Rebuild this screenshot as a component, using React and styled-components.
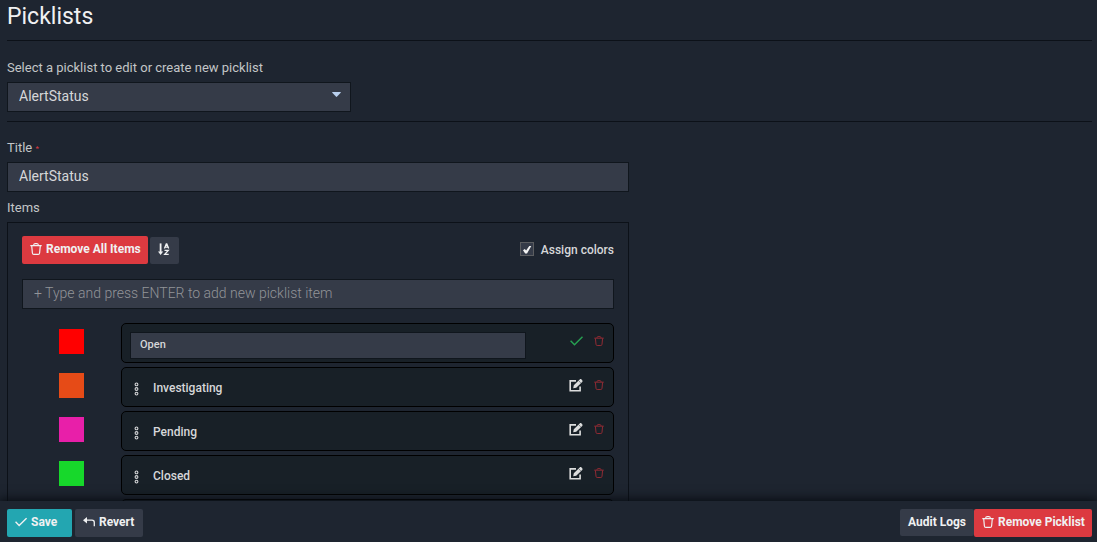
import React, { useState } from "react";
import styled, { createGlobalStyle } from "styled-components";

const GlobalStyle = createGlobalStyle`
  * { box-sizing: border-box; }
  body {
    margin: 0;
    background: #1e2530;
    color: #d6d7d9;
    font-family: Roboto, "Liberation Sans", sans-serif;
    font-size: 12px;
  }
  button, input, select { font: inherit; color: inherit; margin: 0; }
`;

const Page = styled.div`
  height: 100vh;
  display: flex;
  flex-direction: column;
`;

const Content = styled.main`
  flex: 1;
  min-height: 0;
  overflow-y: auto;
  scrollbar-width: none;
  padding: 0 5px 0 7px;
`;

const Heading = styled.h1`
  margin: 0;
  padding-top: 2px;
  height: 40px;
  font-size: 23px;
  line-height: 30px;
  font-weight: 400;
  color: #f0f1f2;
`;

const Rule = styled.hr`
  margin: 0;
  border: 0;
  height: 1px;
  background: #0c1118;
`;

const Field = styled.div`
  display: flex;
  flex-direction: column;
  padding-top: ${(p) => p.$top}px;
  max-width: ${(p) => p.$width}px;
`;

const Label = styled.label`
  font-size: 13px;
  line-height: 16px;
  margin-bottom: 6px;
  font-weight: 400;
  color: #c3c5c7;
`;

const Required = styled.span`
  color: #dc3a40;
  font-size: 8px;
  line-height: 8px;
  vertical-align: 1px;
`;

const TextBox = styled.input`
  width: 100%;
  height: 30px;
  padding: 0 11px 2px;
  border: 1px solid #10161d;
  border-radius: 0;
  outline: 0;
  background: #353b48;
  font-size: 14px;
  &::placeholder { color: #929498; opacity: 1; font-weight: 300; }
`;

const SelectWrap = styled.div`
  display: grid;
  align-items: center;
  margin-bottom: 9px;
  > * { grid-area: 1 / 1; }
  > svg { justify-self: end; margin: 0 10px 5px 0; pointer-events: none; }
`;

const Select = styled.select`
  appearance: none;
  width: 100%;
  height: 30px;
  padding: 0 11px 2px;
  border: 1px solid #10161d;
  border-radius: 0;
  outline: 0;
  background: #353b48;
  font-size: 14px;
`;

const Panel = styled.section`
  max-width: 622px;
  padding: 13px 14px;
  border: 1px solid #0c1118;
`;

const Toolbar = styled.div`
  display: flex;
  align-items: flex-end;
  gap: 2px;
  margin-bottom: 15px;
`;

const colours = { danger: "#dc3a40", primary: "#23a6b1", plain: "#353b48" };

const Button = styled.button`
  display: inline-flex;
  align-items: center;
  gap: 4px;
  height: ${(p) => (p.$short ? 27 : 28)}px;
  min-width: ${(p) => p.$width}px;
  padding: 0 6px 2px 8px;
  border: 0;
  border-radius: 2px;
  background: ${(p) => colours[p.$kind]};
  color: #f0f1f2;
  font-size: 12px;
  font-weight: 700;
  white-space: nowrap;
`;

const CheckLabel = styled.label`
  display: flex;
  align-items: center;
  gap: 7px;
  height: 28px;
  margin-left: auto;
  font-weight: 500;
`;

const Check = styled.input`
  appearance: none;
  width: 14px;
  height: 14px;
  border: 1px solid #5b5d60;
  background: #353b48;
`;

const CheckBoxWrap = styled.span`
  display: grid;
  padding-bottom: 2px;
  > * { grid-area: 1 / 1; }
  > svg { pointer-events: none; }
`;

const List = styled.ul`
  list-style: none;
  margin: 14px 0 0;
  padding: 0;
  display: flex;
  flex-direction: column;
  gap: 4px;
`;

const Item = styled.li`
  display: grid;
  grid-template-columns: 99px 1fr;
`;

const Swatch = styled.input`
  appearance: none;
  width: 25px;
  height: 25px;
  margin: 6px 37px;
  padding: 0;
  border: 0;
  background: none;
  &::-webkit-color-swatch-wrapper { padding: 0; }
  &::-webkit-color-swatch { border: 0; border-radius: 0; }
`;

const Card = styled.div`
  display: flex;
  align-items: center;
  height: 40px;
  padding: 0 9px 0 8px;
  border: 1px solid #000;
  border-radius: 5px;
  background: #182027;
`;

const Grip = styled.span`
  display: flex;
  padding: 4px 4px 0;
  margin-right: 10px;
`;

const Name = styled.span`
  padding-top: 2px;
  font-weight: 500;
`;

const EditBox = styled.input`
  flex: 0 1 396px;
  min-width: 0;
  height: 27px;
  margin-top: 5px;
  padding: 0 9px 2px;
  border: 1px solid #10161d;
  outline: 0;
  background: #353b48;
  font-size: 11px;
  font-weight: 500;
`;

const Actions = styled.div`
  display: flex;
  align-items: center;
  gap: 11px;
  margin-left: auto;
  padding-bottom: 4px;
`;

const IconButton = styled.button`
  display: flex;
  padding: 0;
  border: 0;
  background: none;
  color: ${(p) => p.$color};
`;

const Footer = styled.footer`
  position: relative;
  display: flex;
  align-items: flex-start;
  gap: 3px;
  height: 41px;
  padding: 8px 5px 0 7px;
  background: #1e2530;
  box-shadow: 0 -1px 10px 1px #080c12;
`;

const FooterEnd = styled.div`
  display: flex;
  align-items: flex-start;
  margin-left: auto;
`;

const TrashIcon = ({ size = 12 }) => (
  <svg width={size} height={size} viewBox="0 0 12 12" fill="none" stroke="currentColor" strokeWidth="1.2" aria-hidden="true">
    <path d="M.3 2.6h11.4M3.6 2.5c0-1.3.6-1.9 1.4-1.9h2c.8 0 1.4.6 1.4 1.9M1.7 2.8l.7 7.2c.1 1 .6 1.4 1.4 1.4h4.4c.8 0 1.3-.4 1.4-1.4l.7-7.2" />
  </svg>
);

const TickIcon = ({ width = 13 }) => (
  <svg width={width} height="10" viewBox="0 0 13 10" fill="none" stroke="currentColor" strokeWidth="1.5" aria-hidden="true">
    <path d="M.6 4.8 4.5 8.7 12.5.8" />
  </svg>
);

const UndoIcon = () => (
  <svg width="12" height="10" viewBox="0 0 12 10" aria-hidden="true">
    <path d="M0 3.2 4 0v6.4z" fill="currentColor" />
    <path d="M3 3.2h6c1.6 0 2.3.8 2.3 2.2v3.8" fill="none" stroke="currentColor" strokeWidth="1.3" />
  </svg>
);

const SortIcon = () => (
  <svg width="12" height="13" viewBox="0 0 12 13" fill="none" stroke="currentColor" aria-hidden="true">
    <path d="M2.6.4v9" strokeWidth="1.8" />
    <path d="M0 8.6h5.2L2.6 12z" fill="currentColor" stroke="none" />
    <path d="M6.4 5.6 8.3.9h.5l1.9 4.7M7 4.1h3.1" strokeWidth="1.3" />
    <path d="M6.5 7.4h3.8L6.7 11.4h4" strokeWidth="1.3" />
  </svg>
);

const EditIcon = () => (
  <svg width="14" height="13" viewBox="0 0 14 13" fill="none" stroke="currentColor" aria-hidden="true">
    <path d="M7 1.9H1.2v9.9h9.9V7.5" strokeWidth="1.6" />
    <path d="M4.2 9.2 4.8 6.3 10.7.5c.6-.6 1.3-.6 1.8 0l.7.7c.5.5.5 1.2 0 1.8L7.2 8.7z" fill="currentColor" stroke="none" />
    <path d="m9.7 1.8 2.1 2.1" stroke="#182027" strokeWidth=".5" />
  </svg>
);

const GripIcon = () => (
  <svg width="5" height="14" viewBox="0 0 5 14" fill="none" stroke="currentColor" strokeWidth="1.1" aria-hidden="true">
    <circle cx="2.5" cy="2.4" r="1.4" />
    <circle cx="2.5" cy="7" r="1.4" />
    <circle cx="2.5" cy="11.6" r="1.4" />
  </svg>
);

const initialItems = [
  { id: 1, name: "Open", color: "#ff0000", editing: true },
  { id: 2, name: "Investigating", color: "#e64b17" },
  { id: 3, name: "Pending", color: "#e81fa9" },
  { id: 4, name: "Closed", color: "#17d82b" },
  { id: 5, name: "", color: "#353b48" },
];

function PicklistItem({ item, onColor }) {
  return (
    <Item>
      <Swatch type="color" aria-label={`${item.name} color`} value={item.color} onChange={(e) => onColor(e.target.value)} />
      <Card>
        {item.editing ? (
          <EditBox aria-label="Item name" defaultValue={item.name} />
        ) : (
          <>
            <Grip><GripIcon /></Grip>
            <Name>{item.name}</Name>
          </>
        )}
        <Actions>
          {item.editing ? (
            <IconButton $color="#27a152" aria-label="Confirm"><TickIcon /></IconButton>
          ) : (
            <IconButton $color="#dcdddd" aria-label="Edit"><EditIcon /></IconButton>
          )}
          <IconButton $color="#912b34" aria-label="Remove"><TrashIcon size={10} /></IconButton>
        </Actions>
      </Card>
    </Item>
  );
}

export default function App() {
  const [items, setItems] = useState(initialItems);
  const [assign, setAssign] = useState(true);
  const setColor = (id, color) =>
    setItems(items.map((item) => (item.id === id ? { ...item, color } : item)));

  return (
    <Page>
      <GlobalStyle />
      <Content>
        <Heading>Picklists</Heading>
        <Rule />
        <Field $top={19} $width={344}>
          <Label htmlFor="picklist">Select a picklist to edit or create new picklist</Label>
          <SelectWrap>
            <Select id="picklist" defaultValue="AlertStatus">
              <option>AlertStatus</option>
            </Select>
            <svg width="9" height="5" viewBox="0 0 9 5" aria-hidden="true">
              <path d="M.6 0h7.8q.8.2.3.8L5.1 4.6q-.6.6-1.2 0L.3.8Q-.2.2.6 0z" fill="#b9d0ee" />
            </svg>
          </SelectWrap>
        </Field>
        <Rule />
        <Field $top={18} $width={622}>
          <Label htmlFor="title">Title <Required>*</Required></Label>
          <TextBox id="title" defaultValue="AlertStatus" />
        </Field>
        <Field $top={8} $width={622}>
          <Label as="span">Items</Label>
        </Field>
        <Panel>
          <Toolbar>
            <Button $kind="danger" $width={126}><TrashIcon />Remove All Items</Button>
            <Button $kind="plain" $width={29} $short aria-label="Sort items"><SortIcon /></Button>
            <CheckLabel>
              <CheckBoxWrap>
                <Check type="checkbox" checked={assign} onChange={(e) => setAssign(e.target.checked)} />
                {assign && (
                  <svg width="14" height="14" viewBox="0 0 14 14" aria-hidden="true">
                    <path d="M3 8.2 4.8 7l1.3 1.6L9.3 4h2L7 11.4H5.2z" fill="#f4f4f4" />
                  </svg>
                )}
              </CheckBoxWrap>
              Assign colors
            </CheckLabel>
          </Toolbar>
          <TextBox aria-label="New picklist item" placeholder="+ Type and press ENTER to add new picklist item" />
          <List>
            {items.map((item) => (
              <PicklistItem key={item.id} item={item} onColor={(c) => setColor(item.id, c)} />
            ))}
          </List>
        </Panel>
      </Content>
      <Footer>
        <Button $kind="primary" $width={65}><TickIcon width={12} />Save</Button>
        <Button $kind="plain" $width={68}><UndoIcon />Revert</Button>
        <FooterEnd>
          <Button $kind="plain" $width={74} $short>Audit Logs</Button>
          <Button $kind="danger" $width={118}><TrashIcon />Remove Picklist</Button>
        </FooterEnd>
      </Footer>
    </Page>
  );
}
